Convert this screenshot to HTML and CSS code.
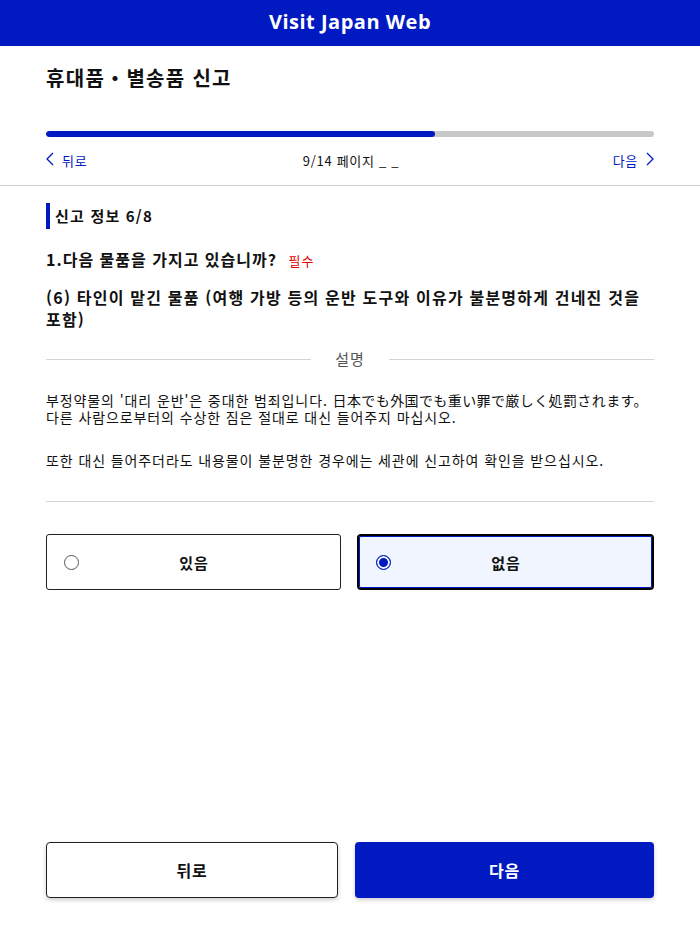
FILE: index.html
```html
<!DOCTYPE html>
<html lang="ko">
<head>
    <meta charset="UTF-8">
    <meta name="viewport" content="width=device-width, initial-scale=1.0">
    <title>Visit Japan Web</title>
    <link rel="stylesheet" href="styles.css">
</head>
<body>

<header class="app-header">Visit Japan Web</header>

<div class="page-top">
    <h1 class="page-title">휴대품・별송품 신고</h1>
    <div class="progress"><div class="progress-fill" style="width: 64%"></div></div>
    <div class="page-nav">
        <a class="nav-link">
            <svg class="chev" viewBox="0 0 8 14" width="8" height="14"><path d="M7 1 1 7l6 6" fill="none" stroke="#0019c0" stroke-width="1.3"/></svg>
            뒤로
        </a>
        <span class="page-count">9/14 페이지 _ _</span>
        <a class="nav-link">
            다음
            <svg class="chev" viewBox="0 0 8 14" width="8" height="14"><path d="M1 1l6 6-6 6" fill="none" stroke="#0019c0" stroke-width="1.3"/></svg>
        </a>
    </div>
</div>

<main class="content">
    <h2 class="section-title">신고 정보 6/8</h2>

    <div class="question">1.다음 물품을 가지고 있습니까? <span class="required">필수</span></div>

    <div class="item-name">(6) 타인이 맡긴 물품 (여행 가방 등의 운반 도구와 이유가 불분명하게 건네진 것을 포함)</div>

    <div class="explain-head"><span>설명</span></div>

    <div class="explain">
        <p>부정약물의 '대리 운반'은 중대한 범죄입니다. <span class="ja" lang="ja">日本でも外国でも重い罪で厳しく処罰されます。</span><br>다른 사람으로부터의 수상한 짐은 절대로 대신 들어주지 마십시오.</p>
        <p>또한 대신 들어주더라도 내용물이 불분명한 경우에는 세관에 신고하여 확인을 받으십시오.</p>
    </div>

    <div class="options">
        <label class="option">
            <span class="radio"></span>
            <span class="option-text">있음</span>
        </label>
        <label class="option selected">
            <span class="radio"></span>
            <span class="option-text">없음</span>
        </label>
    </div>
</main>

<footer class="actions">
    <button class="btn btn-back">뒤로</button>
    <button class="btn btn-next">다음</button>
</footer>

</body>
</html>
```

FILE: styles.css
```css
body {
    margin: 0;
    font-family: "Noto Sans CJK KR", "Noto Sans", sans-serif;
    color: #111;
    background: white;
    width: 700px;
    height: 930px;
    display: flex;
    flex-direction: column;
}
.app-header {
    background: #0019c0;
    color: white;
    height: 46px;
    line-height: 44px;
    text-align: center;
    font-family: "Open Sans", sans-serif;
    font-weight: bold;
    font-size: 20px;
    letter-spacing: 0.5px;
}
.page-top {
    padding: 0 46px;
    border-bottom: 1px solid #cfcfcf;
}
.page-title {
    margin: 0;
    padding-top: 18px;
    font-size: 20px;
    letter-spacing: 1.3px;
    line-height: 28px;
    height: 67px;
}
.progress {
    height: 6px;
    border-radius: 3px;
    background: #c8c8c8;
    overflow: hidden;
}
.progress-fill {
    height: 100%;
    background: #0019c0;
    border-radius: 3px;
}
.page-nav {
    display: flex;
    justify-content: space-between;
    align-items: center;
    height: 46px;
    font-size: 13px;
    letter-spacing: 0.7px;
    padding-bottom: 2px;
}
.nav-link {
    color: #0019c0;
    display: flex;
    align-items: center;
    gap: 8px;
}
.chev {
    margin-top: -2px;
}
.page-count {
    margin-left: 2px;
}
.content {
    padding: 17px 46px 0;
    flex: 1;
}
.section-title {
    margin: 0;
    font-size: 15px;
    letter-spacing: 1.2px;
    line-height: 26px;
    border-left: 4px solid #0019c0;
    padding-left: 5px;
}
.question {
    margin-top: 18px;
    font-size: 16px;
    letter-spacing: 1px;
    font-weight: bold;
    line-height: 24px;
}
.required {
    color: #e00000;
    font-size: 13px;
    font-weight: normal;
    margin-left: 6px;
}
.item-name {
    margin-top: 13px;
    font-size: 16px;
    letter-spacing: 1.2px;
    font-weight: bold;
    line-height: 22px;
}
.explain-head {
    display: flex;
    align-items: center;
    margin-top: 17px;
    color: #555;
    font-size: 15px;
    letter-spacing: 1px;
    line-height: 24px;
}
.explain-head::before, .explain-head::after {
    content: "";
    flex: 1;
    border-top: 1px solid #d4d4d4;
}
.explain-head span {
    padding: 0 24px;
}
.explain {
    margin-top: 21px;
    padding-bottom: 32px;
    border-bottom: 1px solid #d4d4d4;
    font-size: 14px;
    letter-spacing: 0.9px;
    line-height: 17px;
}
.explain .ja {
    font-family: "Noto Sans CJK JP", sans-serif;
    letter-spacing: 0.4px;
}
.explain p {
    margin: 0 0 26px;
}
.explain p:last-child {
    margin-bottom: 0;
}
.options {
    display: flex;
    gap: 16px;
    margin-top: 32px;
}
.option {
    flex: 1;
    height: 56px;
    box-sizing: border-box;
    border: 1px solid #222;
    border-radius: 3px;
    display: flex;
    align-items: center;
    padding-left: 17px;
    font-weight: bold;
    font-size: 15px;
    letter-spacing: 1px;
}
.option.selected {
    border: 2px solid #000;
    box-shadow: inset 0 0 0 1px #0019c0;
    background: #f0f5ff;
    border-radius: 4px;
}
.radio {
    width: 15px;
    height: 15px;
    border: 1px solid #555;
    border-radius: 50%;
    box-sizing: border-box;
    flex-shrink: 0;
}
.option.selected .radio {
    border: 1px solid #0019c0;
    background: #0019c0;
    box-shadow: inset 0 0 0 2px #f0f5ff;
}
.option-text {
    flex: 1;
    text-align: center;
    padding-right: 31px;
}
.actions {
    display: flex;
    gap: 17px;
    padding: 0 46px 32px;
}
.btn {
    flex: 1;
    height: 56px;
    border-radius: 4px;
    font-family: "Noto Sans CJK KR", sans-serif;
    font-size: 16px;
    letter-spacing: 1px;
    font-weight: bold;
    box-shadow: 0 2px 4px rgba(0, 0, 0, 0.2);
    cursor: pointer;
}
.btn-back {
    background: white;
    border: 1px solid #222;
    color: #111;
    flex-basis: 0;
    flex-grow: 0.97;
}
.btn-next {
    background: #0019c0;
    border: none;
    color: white;
}
```
